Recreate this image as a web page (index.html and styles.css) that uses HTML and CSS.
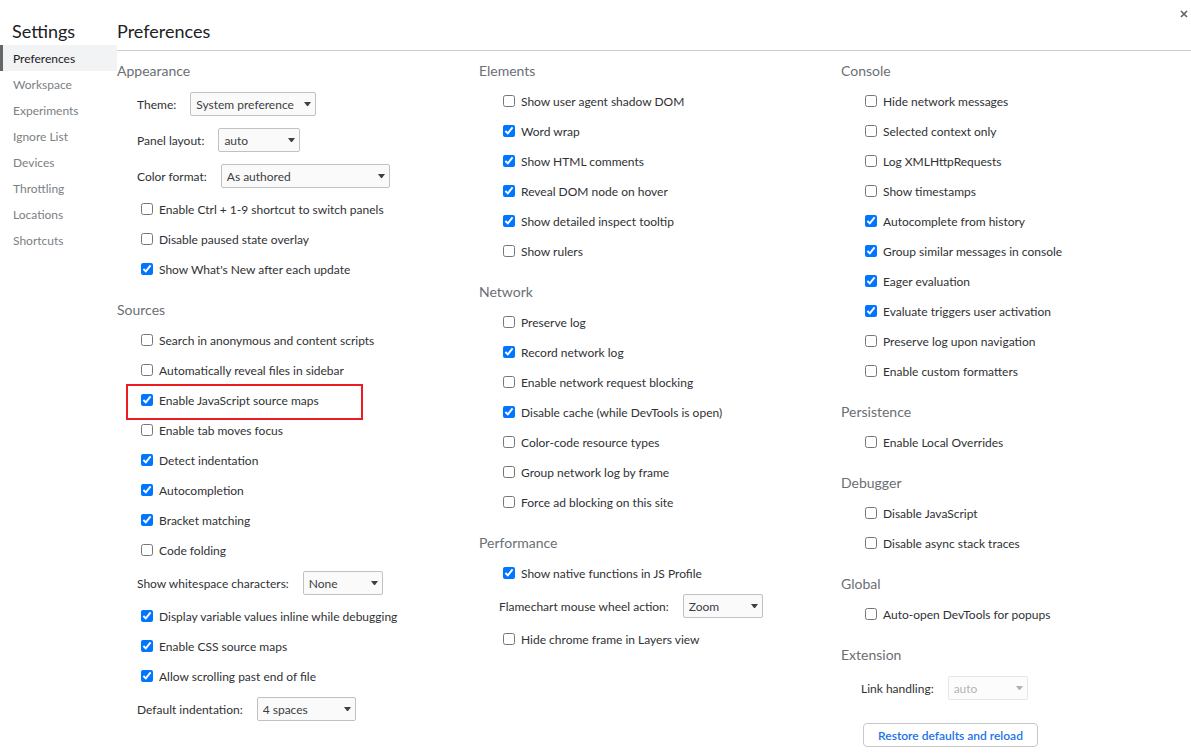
FILE: index.html
```
<!DOCTYPE html>
<html lang="en">
<head>
<meta charset="utf-8">
<title>Settings</title>
<link rel="stylesheet" href="styles.css">
</head>
<body>
<button class="close" type="button" aria-label="Close"><svg width="8" height="8" viewBox="0 0 8 8"><path d="M1 1L7 7M7 1L1 7" fill="none" stroke="#5f6368" stroke-width="1.6"/></svg></button>
<div class="settings">
<nav class="sidebar">
<h1 class="title">Settings</h1>
<a class="tab active" href="#">Preferences</a>
<a class="tab" href="#">Workspace</a>
<a class="tab" href="#">Experiments</a>
<a class="tab" href="#">Ignore List</a>
<a class="tab" href="#">Devices</a>
<a class="tab" href="#">Throttling</a>
<a class="tab" href="#">Locations</a>
<a class="tab" href="#">Shortcuts</a>
</nav>
<main class="content">
<h2 class="title page-title">Preferences</h2>
<div class="columns">
<div class="column">
<section class="group">
<h3 class="heading">Appearance</h3>
<div class="field"><label for="theme">Theme:</label><span class="picker w-theme"><select id="theme"><option>System preference</option></select><svg class="arrow" width="7" height="4" viewBox="0 0 7 4"><path d="M0 0H7L4 4H3Z"/></svg></span></div>
<div class="field"><label for="layout">Panel layout:</label><span class="picker w-layout"><select id="layout"><option>auto</option></select><svg class="arrow" width="7" height="4" viewBox="0 0 7 4"><path d="M0 0H7L4 4H3Z"/></svg></span></div>
<div class="field"><label for="color">Color format:</label><span class="picker w-color"><select id="color"><option>As authored</option></select><svg class="arrow" width="7" height="4" viewBox="0 0 7 4"><path d="M0 0H7L4 4H3Z"/></svg></span></div>
<label class="check"><input type="checkbox"><span>Enable Ctrl + 1-9 shortcut to switch panels</span></label>
<label class="check"><input type="checkbox"><span>Disable paused state overlay</span></label>
<label class="check"><input type="checkbox" checked><span>Show What's New after each update</span></label>
</section>
<section class="group">
<h3 class="heading">Sources</h3>
<label class="check"><input type="checkbox"><span>Search in anonymous and content scripts</span></label>
<label class="check"><input type="checkbox"><span>Automatically reveal files in sidebar</span></label>
<label class="check marked"><input type="checkbox" checked><span>Enable JavaScript source maps</span></label>
<label class="check"><input type="checkbox"><span>Enable tab moves focus</span></label>
<label class="check"><input type="checkbox" checked><span>Detect indentation</span></label>
<label class="check"><input type="checkbox" checked><span>Autocompletion</span></label>
<label class="check"><input type="checkbox" checked><span>Bracket matching</span></label>
<label class="check"><input type="checkbox"><span>Code folding</span></label>
<div class="field"><label for="whitespace">Show whitespace characters:</label><span class="picker"><select id="whitespace"><option>None</option></select><svg class="arrow" width="7" height="4" viewBox="0 0 7 4"><path d="M0 0H7L4 4H3Z"/></svg></span></div>
<label class="check"><input type="checkbox" checked><span>Display variable values inline while debugging</span></label>
<label class="check"><input type="checkbox" checked><span>Enable CSS source maps</span></label>
<label class="check"><input type="checkbox" checked><span>Allow scrolling past end of file</span></label>
<div class="field"><label for="indent">Default indentation:</label><span class="picker w-indent"><select id="indent"><option>4 spaces</option></select><svg class="arrow" width="7" height="4" viewBox="0 0 7 4"><path d="M0 0H7L4 4H3Z"/></svg></span></div>
</section>
</div>
<div class="column">
<section class="group">
<h3 class="heading">Elements</h3>
<label class="check"><input type="checkbox"><span>Show user agent shadow DOM</span></label>
<label class="check"><input type="checkbox" checked><span>Word wrap</span></label>
<label class="check"><input type="checkbox" checked><span>Show HTML comments</span></label>
<label class="check"><input type="checkbox" checked><span>Reveal DOM node on hover</span></label>
<label class="check"><input type="checkbox" checked><span>Show detailed inspect tooltip</span></label>
<label class="check"><input type="checkbox"><span>Show rulers</span></label>
</section>
<section class="group">
<h3 class="heading">Network</h3>
<label class="check"><input type="checkbox"><span>Preserve log</span></label>
<label class="check"><input type="checkbox" checked><span>Record network log</span></label>
<label class="check"><input type="checkbox"><span>Enable network request blocking</span></label>
<label class="check"><input type="checkbox" checked><span>Disable cache (while DevTools is open)</span></label>
<label class="check"><input type="checkbox"><span>Color-code resource types</span></label>
<label class="check"><input type="checkbox"><span>Group network log by frame</span></label>
<label class="check"><input type="checkbox"><span>Force ad blocking on this site</span></label>
</section>
<section class="group">
<h3 class="heading">Performance</h3>
<label class="check"><input type="checkbox" checked><span>Show native functions in JS Profile</span></label>
<div class="field"><label for="wheel">Flamechart mouse wheel action:</label><span class="picker"><select id="wheel"><option>Zoom</option></select><svg class="arrow" width="7" height="4" viewBox="0 0 7 4"><path d="M0 0H7L4 4H3Z"/></svg></span></div>
<label class="check"><input type="checkbox"><span>Hide chrome frame in Layers view</span></label>
</section>
</div>
<div class="column">
<section class="group">
<h3 class="heading">Console</h3>
<label class="check"><input type="checkbox"><span>Hide network messages</span></label>
<label class="check"><input type="checkbox"><span>Selected context only</span></label>
<label class="check"><input type="checkbox"><span>Log XMLHttpRequests</span></label>
<label class="check"><input type="checkbox"><span>Show timestamps</span></label>
<label class="check"><input type="checkbox" checked><span>Autocomplete from history</span></label>
<label class="check"><input type="checkbox" checked><span>Group similar messages in console</span></label>
<label class="check"><input type="checkbox" checked><span>Eager evaluation</span></label>
<label class="check"><input type="checkbox" checked><span>Evaluate triggers user activation</span></label>
<label class="check"><input type="checkbox"><span>Preserve log upon navigation</span></label>
<label class="check"><input type="checkbox"><span>Enable custom formatters</span></label>
</section>
<section class="group">
<h3 class="heading">Persistence</h3>
<label class="check"><input type="checkbox"><span>Enable Local Overrides</span></label>
</section>
<section class="group">
<h3 class="heading">Debugger</h3>
<label class="check"><input type="checkbox"><span>Disable JavaScript</span></label>
<label class="check"><input type="checkbox"><span>Disable async stack traces</span></label>
</section>
<section class="group">
<h3 class="heading">Global</h3>
<label class="check"><input type="checkbox"><span>Auto-open DevTools for popups</span></label>
</section>
<section class="group">
<h3 class="heading">Extension</h3>
<div class="field"><label for="links">Link handling:</label><span class="picker disabled"><select id="links" disabled><option>auto</option></select><svg class="arrow" width="7" height="4" viewBox="0 0 7 4"><path d="M0 0H7L4 4H3Z"/></svg></span></div>
</section>
<button class="restore" type="button">Restore defaults and reload</button>
</div>
</div>
</main>
</div>
</body>
</html>
```
FILE: styles.css
```
*, *::after { box-sizing: border-box; }
body {
  margin: 0;
  background: #fff;
  color: #303134;
  font: 12px/20px Lato, "Open Sans", sans-serif;
}
.settings { display: flex; align-items: flex-start; padding-top: 18px; }
.close {
  position: absolute;
  top: 6px;
  right: 0;
  padding: 4px 3px;
  border: 0;
  background: none;
  line-height: 0;
}
.sidebar { flex: 0 0 117px; }
.title { margin: 0; color: #202124; font-size: 18px; line-height: 26px; font-weight: 400; }
.sidebar .title { padding: 0 0 1px 12px; }
.tab {
  display: block;
  height: 26px;
  padding-left: 10px;
  border-left: 3px solid transparent;
  color: #7b8085;
  line-height: 27px;
  text-decoration: none;
}
.tab.active { border-color: #666; background: #f1f3f4; color: #202124; }
.content { flex: 1; min-width: 0; }
.page-title { padding-bottom: 6px; border-bottom: 1px solid #cacdd1; }
.columns {
  display: grid;
  grid-template-columns: repeat(3, minmax(0, 1fr));
  column-gap: 12px;
  padding-top: 5px;
}
.group { margin-bottom: 11px; padding-left: 20px; }
.heading {
  margin: 0 0 0 -20px;
  color: #6b6f74;
  font-size: 14px;
  font-weight: 400;
  line-height: 30px;
}
.check {
  position: relative;
  display: flex;
  align-items: center;
  gap: 6px;
  height: 30px;
  padding-left: 4px;
  white-space: nowrap;
}
.check input { width: 12px; height: 12px; margin: 0; }
.check span { padding-top: 1px; }
.marked::after {
  content: "";
  position: absolute;
  top: -1px;
  left: -11px;
  width: 237px;
  height: 36px;
  border: 2px solid #ed1c24;
}
.field { display: flex; align-items: center; gap: 14px; height: 36px; white-space: nowrap; }
.field label { padding-top: 1px; }
.picker { position: relative; width: 80px; }
.picker select {
  display: block;
  width: 100%;
  height: 24px;
  padding: 1px 5px 0;
  border: 1px solid #bfc1c4;
  border-radius: 2px;
  background: #fafafa;
  color: #3c4043;
  font: inherit;
  appearance: none;
}
.picker.w-theme { width: 126px; }
.picker.w-layout { width: 82px; }
.picker.w-color { width: 169px; }
.picker.w-indent { width: 99px; }
.arrow { position: absolute; top: 10px; right: 5px; fill: #3c4043; pointer-events: none; }
.disabled { opacity: .4; }
.disabled select { opacity: 1; }
.restore {
  display: block;
  height: 24px;
  min-width: 175px;
  margin: 17px 0 8px 22px;
  padding: 1px 12px 0;
  border: 1px solid #c6c8cb;
  border-radius: 4px;
  background: #fff;
  color: #1a73e8;
  font: 600 12px/20px Lato, "Open Sans", sans-serif;
}
```
